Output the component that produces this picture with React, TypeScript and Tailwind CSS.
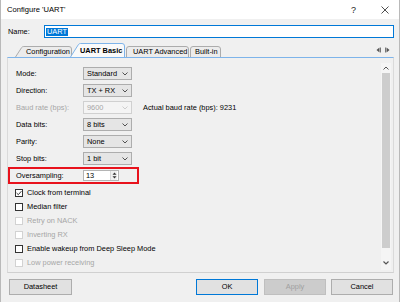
import clsx from 'clsx'

const rows = [
  { label: 'Mode:', value: 'Standard' },
  { label: 'Direction:', value: 'TX + RX' },
  { label: 'Baud rate (bps):', value: '9600', disabled: true, note: 'Actual baud rate (bps): 9231' },
  { label: 'Data bits:', value: '8 bits' },
  { label: 'Parity:', value: 'None' },
  { label: 'Stop bits:', value: '1 bit' },
]

const checks = [
  { label: 'Clock from terminal', checked: true },
  { label: 'Median filter' },
  { label: 'Retry on NACK', disabled: true },
  { label: 'Inverting RX', disabled: true },
  { label: 'Enable wakeup from Deep Sleep Mode' },
  { label: 'Low power receiving', disabled: true },
]

function Chevron({ disabled }: { disabled?: boolean }) {
  return (
    <svg width="6" height="4" viewBox="0 0 6 4" className="shrink-0">
      <path d="M0.5 0.5 L3 3 L5.5 0.5" fill="none" stroke={disabled ? '#c8c8c8' : '#404040'} strokeWidth="0.9" />
    </svg>
  )
}

function Combo({ value, disabled }: { value: string; disabled?: boolean }) {
  return (
    <div
      className={clsx(
        'flex h-[13px] w-[49px] items-center justify-between border pl-[3px] pr-[3px]',
        disabled ? 'border-[#d0d0d0] bg-[#f4f4f4] text-[#a6a6a6]' : 'border-[#adadad] bg-[#e5e5e5] text-black'
      )}
    >
      <span>{value}</span>
      <Chevron disabled={disabled} />
    </div>
  )
}

function Check({ label, checked, disabled }: { label: string; checked?: boolean; disabled?: boolean }) {
  return (
    <div className="flex h-[14px] items-center gap-[4px]">
      <div
        className={clsx(
          'flex h-[8px] w-[8px] items-center justify-center border bg-white',
          disabled ? 'border-[#d2d2d2]' : 'border-[#333333]'
        )}
      >
        {checked && (
          <svg width="6" height="6" viewBox="0 0 6 6">
            <path d="M0.6 3 L2.3 4.7 L5.4 1.2" fill="none" stroke="#222" strokeWidth="0.9" />
          </svg>
        )}
      </div>
      <span className={disabled ? 'text-[#a6a6a6]' : 'text-black'}>{label}</span>
    </div>
  )
}

function Tab({ label, w, h, selected, slant, className, pad }: { label: string; w: number; h: number; selected?: boolean; slant?: boolean; className?: string; pad: string }) {
  const stroke = selected ? '#7eb4ea' : '#acacac'
  const fill = selected ? '#fafafa' : '#ececec'
  const d = slant
    ? `M0.5 ${h} L${h * 0.6} 1.6 Q${h * 0.6 + 0.8} 0.5 ${h * 0.6 + 2.2} 0.5 L${w - 3} 0.5 Q${w - 0.5} 0.5 ${w - 0.5} 3 L${w - 0.5} ${h}`
    : `M0.5 ${h} L0.5 3 Q0.5 0.5 3 0.5 L${w - 3} 0.5 Q${w - 0.5} 0.5 ${w - 0.5} 3 L${w - 0.5} ${h}`
  return (
    <div className={clsx('relative flex shrink-0', className)} style={{ width: w, height: h }}>
      <svg width={w} height={h} className="absolute inset-0">
        <path d={d} fill={fill} stroke={stroke} strokeWidth="1" />
      </svg>
      <span className={clsx('relative flex w-full items-center', pad, selected && 'font-bold')}>{label}</span>
    </div>
  )
}

export default function App() {
  return (
    <div className="flex h-[302px] w-[400px] flex-col overflow-hidden border-x border-[#b9b9b9] bg-[#f0f0f0] font-['Liberation_Sans',Arial,sans-serif] text-[7.4px] leading-none text-black">
      {/* title bar */}
      <div className="flex h-[19px] shrink-0 items-center bg-white pl-[6px] pt-[1px]">
        <span className="text-[7.6px]">Configure 'UART'</span>
        <span className="ml-auto mr-[25px] text-[9px] text-[#222]">?</span>
        <svg width="8" height="8" viewBox="0 0 8 8" className="mr-[10px]">
          <path d="M0.5 0.5 L7.5 7.5 M7.5 0.5 L0.5 7.5" stroke="#222" strokeWidth="0.8" />
        </svg>
      </div>

      {/* name */}
      <div className="mt-[6px] flex h-[13px] shrink-0 items-center pl-[7px] pr-[5px]">
        <span className="w-[36px]">Name:</span>
        <div className="flex h-[13px] flex-1 items-center border border-[#0078d7] bg-white pl-[1px]">
          <span className="flex h-[8px] items-center bg-[#0078d7] px-[1px] text-white">UART</span>
        </div>
      </div>

      {/* tabs */}
      <div className="mt-[5px] flex h-[14px] shrink-0 items-end pl-[14px] pr-[9px]">
        <Tab label="Configuration" w={57} h={11} slant pad="pl-[11px]" />
        <Tab label="UART Basic" w={55} h={14} slant selected className="z-10 -ml-[2px]" pad="pl-[10px] pt-[2px]" />
        <Tab label="UART Advanced" w={63} h={11} className="ml-[1px]" pad="pl-[7px]" />
        <Tab label="Built-in" w={31} h={11} className="ml-[1px]" pad="pl-[5px]" />
        <div className="mb-[4px] ml-auto flex items-center gap-[4px]">
          <svg width="5" height="6" viewBox="0 0 5 6">
            <path d="M3.5 0.5 L0.5 3 L3.5 5.5 Z" fill="#555" />
            <path d="M4.5 0.5 L4.5 5.5" stroke="#555" strokeWidth="0.8" />
          </svg>
          <svg width="5" height="6" viewBox="0 0 5 6">
            <path d="M1.5 0.5 L4.5 3 L1.5 5.5 Z" fill="#555" />
            <path d="M0.5 0.5 L0.5 5.5" stroke="#555" strokeWidth="0.8" />
          </svg>
        </div>
      </div>

      {/* panel */}
      <div className="ml-[6px] mr-[5px] flex h-[216px] shrink-0 border border-t-[#7eb4ea] border-x-[#dadada] border-b-[#d0d0d0]">
        <div className="flex flex-1 flex-col pt-[9px]">
          <div className="flex flex-col gap-[4px] pl-[8px]">
            {rows.map((r) => (
              <div key={r.label} className="flex h-[13px] items-center">
                <span className={clsx('w-[67px]', r.disabled ? 'text-[#a6a6a6]' : 'text-black')}>{r.label}</span>
                <Combo value={r.value} disabled={r.disabled} />
                {r.note && <span className="ml-[11px]">{r.note}</span>}
              </div>
            ))}
          </div>

          <div className="mt-[2px] flex h-[17px] w-[131px] items-center border-2 border-[#e8121c] pl-[6px]">
            <span className="w-[67px]">Oversampling:</span>
            <div className="flex h-[11px] w-[36px] items-center border border-[#b4b4b4] bg-white">
              <span className="flex-1 pl-[2px]">13</span>
              <div className="mr-[1px] flex h-[9px] w-[7px] flex-col items-center justify-center gap-[1px] border-l border-[#d8d8d8] bg-[#f0f0f0]">
                <svg width="5" height="3" viewBox="0 0 5 3">
                  <path d="M0.5 2.8 L2.5 0.5 L4.5 2.8 Z" fill="#333" />
                </svg>
                <svg width="5" height="3" viewBox="0 0 5 3">
                  <path d="M0.5 0.2 L2.5 2.5 L4.5 0.2 Z" fill="#333" />
                </svg>
              </div>
            </div>
          </div>

          <div className="mt-[2px] flex flex-col pl-[7px]">
            {checks.map((c) => (
              <Check key={c.label} label={c.label} checked={c.checked} disabled={c.disabled} />
            ))}
          </div>
        </div>

        {/* scrollbar */}
        <div className="mb-[2px] mr-[2px] mt-[5px] flex w-[10px] flex-col bg-[#f5f5f5]">
          <div className="flex h-[10px] items-center justify-center">
            <svg width="6" height="4" viewBox="0 0 6 4">
              <path d="M0.5 3.5 L3 1 L5.5 3.5" fill="none" stroke="#555" strokeWidth="1" />
            </svg>
          </div>
          <div className="mx-[1px] h-[175px] bg-[#cdcdcd]" />
          <div className="flex-1" />
          <div className="flex h-[14px] items-center justify-center">
            <svg width="6" height="4" viewBox="0 0 6 4">
              <path d="M0.5 0.5 L3 3 L5.5 0.5" fill="none" stroke="#555" strokeWidth="1.2" />
            </svg>
          </div>
        </div>
      </div>

      {/* buttons */}
      <div className="ml-[8px] mr-[6px] mt-[6px] flex h-[16px] shrink-0 items-center">
        <button className="flex h-[16px] w-[63px] items-center justify-center border border-[#adadad] bg-[#e1e1e1]">Datasheet</button>
        <button className="ml-auto flex h-[16px] w-[62px] items-center justify-center border border-[#0078d7] bg-[#e1e1e1]">OK</button>
        <button className="ml-[6px] flex h-[16px] w-[62px] items-center justify-center border border-[#bfbfbf] bg-[#cccccc] text-[#a0a0a0]">Apply</button>
        <button className="ml-[5px] flex h-[16px] w-[62px] items-center justify-center border border-[#adadad] bg-[#e1e1e1]">Cancel</button>
      </div>
    </div>
  )
}
